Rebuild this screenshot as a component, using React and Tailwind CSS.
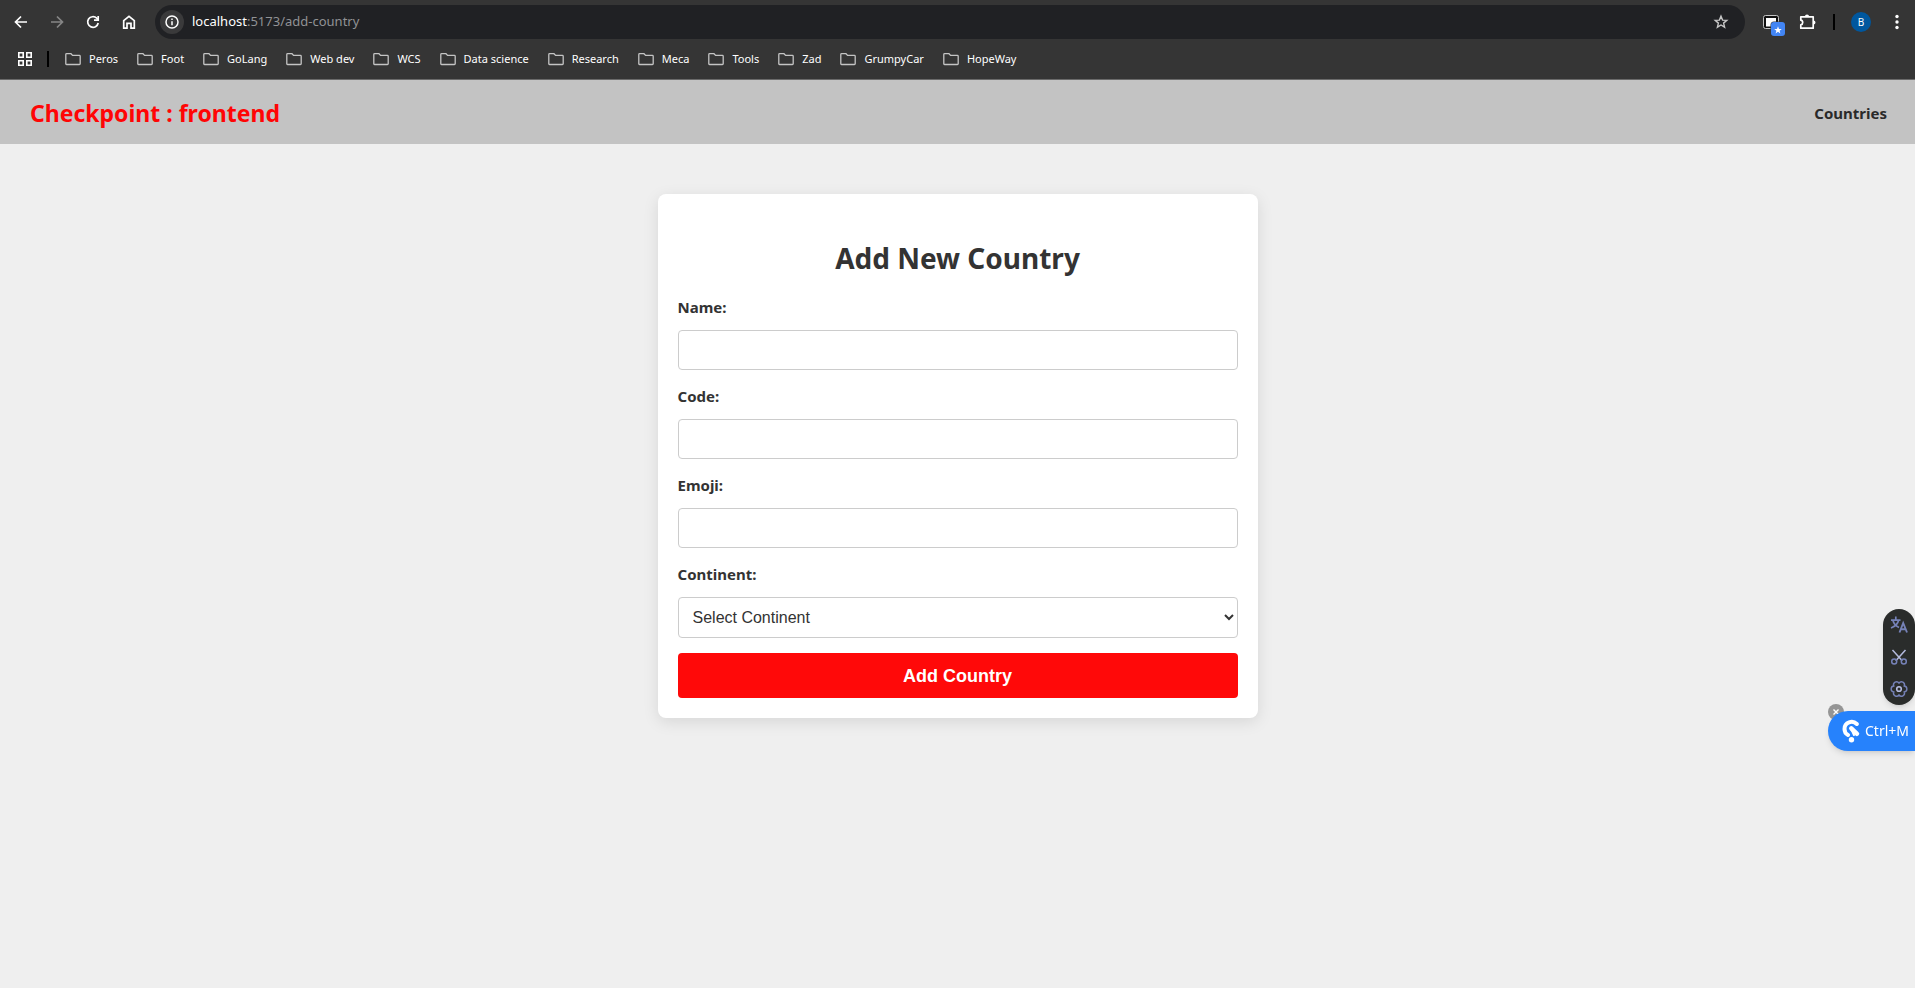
import React from "react";

const folders = [
  "Peros", "Foot", "GoLang", "Web dev", "WCS", "Data science",
  "Research", "Meca", "Tools", "Zad", "GrumpyCar", "HopeWay",
];

const continents = ["Africa", "Asia", "Europe", "North America", "Oceania", "South America"];

function Icon({ children, className = "h-5 w-5", box = "0 0 20 20" }) {
  return (
    <svg viewBox={box} className={className} fill="none" stroke="currentColor" aria-hidden="true">
      {children}
    </svg>
  );
}

function Toolbar() {
  return (
    <div className="flex h-11 items-center pr-2 pl-[11px] text-white">
      <div className="flex items-center gap-4">
        <button type="button" aria-label="Back">
          <Icon><path d="M16 10H5M10 4.500L4.500 10L10 15.500" strokeWidth="1.700" /></Icon>
        </button>
        <button type="button" aria-label="Forward" className="text-[#868686]">
          <Icon><path d="M4 10H15M10 4.500L15.500 10L10 15.500" strokeWidth="1.700" /></Icon>
        </button>
        <button type="button" aria-label="Reload">
          <Icon>
            <path d="M15.200 11A5.300 5.300 0 1 1 13.700 6.200L15 7.500" strokeWidth="1.700" />
            <path d="M15.200 4V8.200H11" strokeWidth="1.700" />
          </Icon>
        </button>
        <button type="button" aria-label="Home">
          <Icon><path d="M4.700 8.600L10 4.400L15.300 8.600V16.200H12V11.300H8V16.200H4.700Z" strokeWidth="1.700" /></Icon>
        </button>
      </div>
      <div className="ml-4 flex h-[34px] flex-1 items-center rounded-full bg-[#202124] pr-3.5 pl-[5px]">
        <button
          type="button"
          aria-label="View site information"
          className="flex h-6 w-6 items-center justify-center rounded-full bg-[#3a3a3b]"
        >
          <Icon className="h-4 w-4" box="0 0 16 16">
            <circle cx="8" cy="8" r="6" strokeWidth="1.500" />
            <path d="M8 7.200V11.200M8 4.600V6" strokeWidth="1.500" />
          </Icon>
        </button>
        <div className="ml-2 flex-1 text-[13px] text-[#919295]">
          <span className="text-white">localhost</span>:5173/add-country
        </div>
        <button type="button" aria-label="Bookmark this tab" className="text-[#c7c7c7]">
          <Icon>
            <path
              d="M10 4.200L11.600 8.100L15.800 8.400L12.600 11.100L13.600 15.200L10 13L6.400 15.200L7.400 11.100L4.200 8.400L8.400 8.100Z"
              strokeWidth="1.400"
            />
          </Icon>
        </button>
      </div>
      <div className="ml-4 flex items-center gap-4">
        <button type="button" aria-label="Tab saver extension">
          <svg viewBox="0 0 20 20" className="h-5 w-5 overflow-visible" aria-hidden="true">
            <rect x="2.500" y="3.500" width="15" height="13" rx="2" fill="#111" stroke="#c4c4c4" />
            <rect x="5" y="6" width="10" height="8.500" fill="#fff" />
            <rect x="9.500" y="9.500" width="15" height="15" rx="3.500" fill="#353535" />
            <rect x="10" y="10" width="14" height="14" rx="3" fill="#4285f4" />
            <path
              d="M17 14.200L18 16.900L20.800 17L18.600 18.700L19.400 21.400L17 19.800L14.600 21.400L15.400 18.700L13.200 17L16 16.900Z"
              fill="#fff"
            />
          </svg>
        </button>
        <button type="button" aria-label="Extensions">
          <Icon>
            <path
              d="M3.800 4.800H16.200V16.200H3.800V12.800C5 12.600 5.700 11.700 5.700 10.500S5 8.400 3.800 8.200Z"
              strokeWidth="1.700"
              strokeLinejoin="round"
            />
            <path d="M7.900 4.600A2.100 2.100 0 0 1 12.100 4.600ZM16.400 8.400A2.100 2.100 0 0 1 16.400 12.600Z" fill="currentColor" stroke="none" />
          </Icon>
        </button>
        <span className="h-4 w-0.5 bg-black" />
        <button
          type="button"
          aria-label="Profile"
          className="flex h-5 w-5 items-center justify-center rounded-full bg-[#00579e] text-[10px] leading-5"
        >
          B
        </button>
        <button type="button" aria-label="Browser menu">
          <svg viewBox="0 0 20 20" className="h-5 w-5" fill="currentColor" aria-hidden="true">
            <circle cx="10" cy="4.500" r="1.700" />
            <circle cx="10" cy="10" r="1.700" />
            <circle cx="10" cy="15.500" r="1.700" />
          </svg>
        </button>
      </div>
    </div>
  );
}

function BookmarksBar() {
  return (
    <div className="flex h-[30px] items-center pl-[17px] text-[11px] leading-4 text-white">
      <button type="button" aria-label="Apps">
        <Icon className="h-4 w-4" box="0 0 16 16">
          <path
            d="M1.800 1.800H6.200V6.200H1.800ZM9.800 1.800H14.200V6.200H9.800ZM1.800 9.800H6.200V14.200H1.800ZM9.800 9.800H14.200V14.200H9.800Z"
            strokeWidth="1.600"
          />
        </Icon>
      </button>
      <span className="mr-4 ml-3.5 h-4 w-0.5 bg-black" />
      <nav className="flex items-center gap-[19px]">
        {folders.map((name) => (
          <a key={name} href="#" className="flex items-center gap-2">
            <Icon className="h-4 w-4 text-[#c4c4c4]" box="0 0 16 16">
              <path
                d="M.8 3.500Q.8 2.700 1.600 2.700H6L7.600 4.400H14.400Q15.200 4.400 15.200 5.200V12.700Q15.200 13.500 14.400 13.500H1.600Q.8 13.500 .8 12.700Z"
                strokeWidth="1.300"
              />
            </Icon>
            {name}
          </a>
        ))}
      </nav>
    </div>
  );
}

function Field({ id, label, children }) {
  return (
    <div className="flex flex-col gap-3">
      <label htmlFor={id} className="text-[15px] leading-[22px] font-bold">{label}</label>
      {children}
    </div>
  );
}

const control =
  "w-full rounded border border-[#ccc] bg-white px-2.5 font-['Liberation_Sans',Arial,sans-serif] text-base text-[#333]";

function CountryForm() {
  return (
    <form className="mx-auto flex max-w-[600px] flex-col rounded-lg bg-white p-5 shadow-[0_4px_16px_rgba(0,0,0,0.1)]">
      <h1 className="mt-6 mb-[18px] text-center text-[28px] leading-10 font-bold">Add New Country</h1>
      <div className="flex flex-col gap-[15px]">
        <Field id="name" label="Name:">
          <input id="name" type="text" className={`${control} h-10`} />
        </Field>
        <Field id="code" label="Code:">
          <input id="code" type="text" className={`${control} h-10`} />
        </Field>
        <Field id="emoji" label="Emoji:">
          <input id="emoji" type="text" className={`${control} h-10`} />
        </Field>
        <Field id="continent" label="Continent:">
          <select id="continent" defaultValue="" className={`${control} h-[41px]`}>
            <option value="">Select Continent</option>
            {continents.map((c) => (
              <option key={c} value={c}>{c}</option>
            ))}
          </select>
        </Field>
        <button
          type="submit"
          className="h-[45px] rounded bg-[#ff0909] font-['Liberation_Sans',Arial,sans-serif] text-lg font-bold text-white"
        >
          Add Country
        </button>
      </div>
    </form>
  );
}

function FloatingTools() {
  return (
    <aside className="fixed top-[609px] right-0 flex flex-col items-end">
      <div className="flex flex-col gap-3 rounded-full bg-[#2a2c2b] px-1.5 py-1.5 text-[#7682b8] shadow-md">
        <button type="button" aria-label="Translate">
          <Icon>
            <path d="M2 5.200H11.500M6.800 1.500V5M4 5.500Q5 10 10 12.500M9.500 5.500Q8.500 10.500 2 13" strokeWidth="1.700" />
            <path d="M10.500 17.500L14.200 8L18 17.500M11.800 14.300H16.700" strokeWidth="1.900" />
          </Icon>
        </button>
        <button type="button" aria-label="Screenshot">
          <Icon>
            <path d="M3.500 3L13.200 13.800M16.500 3L6.800 13.800" stroke="#b4bbdf" strokeWidth="1.500" />
            <circle cx="5.200" cy="14.500" r="2.500" strokeWidth="1.500" />
            <circle cx="14.800" cy="14.500" r="2.500" strokeWidth="1.500" />
          </Icon>
        </button>
        <button type="button" aria-label="Settings">
          <Icon>
            <path
              d="M10 4A3.020 3.020 0 0 1 15.200 7A3.020 3.020 0 0 1 15.200 13A3.020 3.020 0 0 1 10 16A3.020 3.020 0 0 1 4.800 13A3.020 3.020 0 0 1 4.800 7A3.020 3.020 0 0 1 10 4Z"
              strokeWidth="1.400"
            />
            <circle cx="10" cy="10" r="2.300" stroke="#b4bbdf" strokeWidth="1.600" />
          </Icon>
        </button>
      </div>
      <div className="relative mt-1.5">
        <button
          type="button"
          aria-label="Close"
          className="absolute -top-[7px] left-0 flex h-4 w-4 items-center justify-center rounded-full bg-[#959595] text-white"
        >
          <Icon className="h-2 w-2" box="0 0 8 8"><path d="M1.500 1.500L6.500 6.500M6.500 1.500L1.500 6.500" strokeWidth="1.400" /></Icon>
        </button>
        <button
          type="button"
          className="relative flex h-10 items-center gap-1 rounded-l-full bg-[#2682fc] pr-1.5 pl-[13px] text-sm text-white shadow-md"
        >
          <svg viewBox="0 0 20 24" className="h-6 w-5" fill="none" stroke="#fff" strokeLinecap="round" aria-hidden="true">
            <path d="M15.800 5C11.500 .8 3.500 3.200 3.500 10C3.500 12.800 4.800 14.800 7 16" strokeWidth="4" />
            <path d="M10.300 9.300L16 14.800" strokeWidth="4.500" />
            <path d="M10.300 10L13 16" strokeWidth="2" />
            <circle cx="10.500" cy="20.800" r="2.700" fill="#fff" stroke="none" />
          </svg>
          Ctrl+M
        </button>
      </div>
    </aside>
  );
}

export default function App() {
  return (
    <div className="min-h-screen bg-[#efefef] font-['Noto_Sans',sans-serif] text-[#333]">
      <div className="h-20 border-b border-[#6a6a6a] bg-[#353535]">
        <Toolbar />
        <BookmarksBar />
      </div>
      <header className="flex h-16 items-center justify-between bg-[#c3c3c3] px-7 pt-0.5">
        <a href="#" className="pl-0.5 text-[23px] leading-8 font-bold text-[#ff0505]">Checkpoint : frontend</a>
        <a href="#" className="text-[15px] leading-6 font-bold text-[#2a2a2a]">Countries</a>
      </header>
      <main className="px-5 py-[50px]">
        <CountryForm />
      </main>
      <FloatingTools />
    </div>
  );
}
